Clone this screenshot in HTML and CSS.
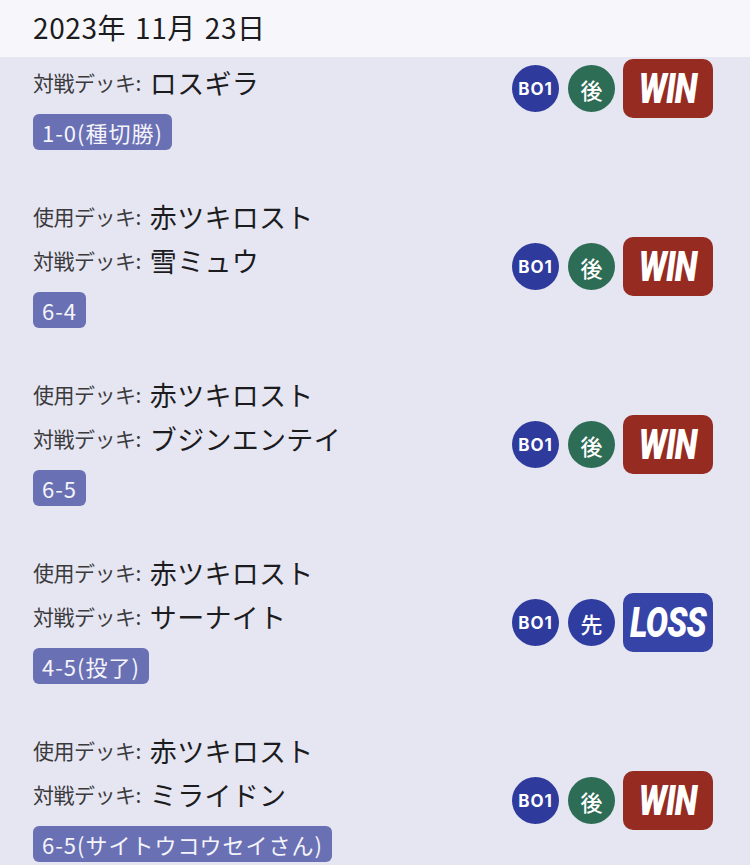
FILE: index.html
```html
<!DOCTYPE html>
<html lang="ja">
<head>
    <meta charset="UTF-8">
    <meta name="viewport" content="width=device-width, initial-scale=1.0">
    <title>対戦記録</title>
    <link rel="stylesheet" href="styles.css">
</head>
<body>
    <!-- 日付ヘッダー（リストの上に固定） -->
    <header class="date-header">2023年 11月 23日</header>

    <div class="match-list">
        <div class="match">
            <div class="match-info">
                <div class="deck-line"><span class="label">使用デッキ:</span><span class="deck">赤ツキロスト</span></div>
                <div class="deck-line"><span class="label">対戦デッキ:</span><span class="deck">ロスギラ</span></div>
                <span class="score">1-0(種切勝)</span>
            </div>
            <div class="match-tags">
                <span class="circle bo">BO1</span>
                <span class="circle second">後</span>
                <span class="result win"><span class="result-text">WIN</span></span>
            </div>
        </div>

        <div class="match">
            <div class="match-info">
                <div class="deck-line"><span class="label">使用デッキ:</span><span class="deck">赤ツキロスト</span></div>
                <div class="deck-line"><span class="label">対戦デッキ:</span><span class="deck">雪ミュウ</span></div>
                <span class="score">6-4</span>
            </div>
            <div class="match-tags">
                <span class="circle bo">BO1</span>
                <span class="circle second">後</span>
                <span class="result win"><span class="result-text">WIN</span></span>
            </div>
        </div>

        <div class="match">
            <div class="match-info">
                <div class="deck-line"><span class="label">使用デッキ:</span><span class="deck">赤ツキロスト</span></div>
                <div class="deck-line"><span class="label">対戦デッキ:</span><span class="deck">ブジンエンテイ</span></div>
                <span class="score">6-5</span>
            </div>
            <div class="match-tags">
                <span class="circle bo">BO1</span>
                <span class="circle second">後</span>
                <span class="result win"><span class="result-text">WIN</span></span>
            </div>
        </div>

        <div class="match">
            <div class="match-info">
                <div class="deck-line"><span class="label">使用デッキ:</span><span class="deck">赤ツキロスト</span></div>
                <div class="deck-line"><span class="label">対戦デッキ:</span><span class="deck">サーナイト</span></div>
                <span class="score">4-5(投了)</span>
            </div>
            <div class="match-tags">
                <span class="circle bo">BO1</span>
                <span class="circle first">先</span>
                <span class="result loss"><span class="result-text">LOSS</span></span>
            </div>
        </div>

        <div class="match">
            <div class="match-info">
                <div class="deck-line"><span class="label">使用デッキ:</span><span class="deck">赤ツキロスト</span></div>
                <div class="deck-line"><span class="label">対戦デッキ:</span><span class="deck">ミライドン</span></div>
                <span class="score">6-5(サイトウコウセイさん)</span>
            </div>
            <div class="match-tags">
                <span class="circle bo">BO1</span>
                <span class="circle second">後</span>
                <span class="result win"><span class="result-text">WIN</span></span>
            </div>
        </div>
    </div>
</body>
</html>
```

FILE: styles.css
```css
/* 全体 */
body {
    margin: 0;
    background-color: #e6e6f2;
    font-family: "Noto Sans CJK JP", "Noto Sans", sans-serif;
    color: #1c1c1e;
    overflow: hidden;
}

/* 日付ヘッダー */
.date-header {
    position: fixed;
    top: 0;
    left: 0;
    right: 0;
    z-index: 1;
    height: 57px;
    line-height: 54px;
    padding-left: 33px;
    background-color: #f7f7fb;
    font-size: 28px;
    letter-spacing: 0.6px;
    word-spacing: 2px;
    color: #1c1c1e;
}

/* 対戦ごとの行 */
.match {
    display: flex;
    justify-content: space-between;
    align-items: center;
    padding: 16px 37px 28px 33px;
}

.match-info {
    display: flex;
    flex-direction: column;
    align-items: flex-start;
}

.deck-line {
    display: flex;
    align-items: center;
    height: 44px;
    white-space: nowrap;
}

.label {
    font-size: 21px;
    color: #3a3a3c;
    margin-right: 9px;
    letter-spacing: -0.5px;
}

.deck {
    font-size: 27px;
    color: #1c1c1e;
    letter-spacing: 0.3px;
}

/* スコアのバッジ */
.score {
    box-sizing: border-box;
    margin-top: 10px;
    height: 36px;
    line-height: 36px;
    padding: 0 9px;
    border-radius: 6px;
    background-color: #6a70b4;
    color: #f4f4fa;
    font-size: 22px;
    letter-spacing: 1px;
    white-space: nowrap;
}

/* 右側のタグ */
.match-tags {
    display: flex;
    align-items: center;
    margin-top: 11px;
}

.circle {
    width: 47px;
    height: 47px;
    border-radius: 50%;
    display: flex;
    align-items: center;
    justify-content: center;
    color: #fff;
    margin-right: 9px;
}

.circle.bo {
    background-color: #2e3a9c;
    font-family: "Inter", "Noto Sans", sans-serif;
    font-weight: 700;
    font-size: 17px;
    letter-spacing: 1px;
}

.circle.second {
    background-color: #2d6c55;
    font-size: 22px;
    font-weight: 500;
}

.circle.first {
    background-color: #2f3ca0;
    font-size: 22px;
    font-weight: 500;
}

.result {
    width: 90px;
    height: 59px;
    border-radius: 10px;
    display: flex;
    align-items: center;
    justify-content: center;
    margin-left: -1px;
}

.result.win {
    background-color: #962b22;
}

.result.loss {
    background-color: #3644a8;
}

.result-text {
    display: inline-block;
    font-family: "Roboto", "Liberation Sans", sans-serif;
    font-weight: 900;
    font-style: italic;
    font-size: 42px;
    color: #fff;
    letter-spacing: -1px;
    transform: scaleX(0.79);
}
```
